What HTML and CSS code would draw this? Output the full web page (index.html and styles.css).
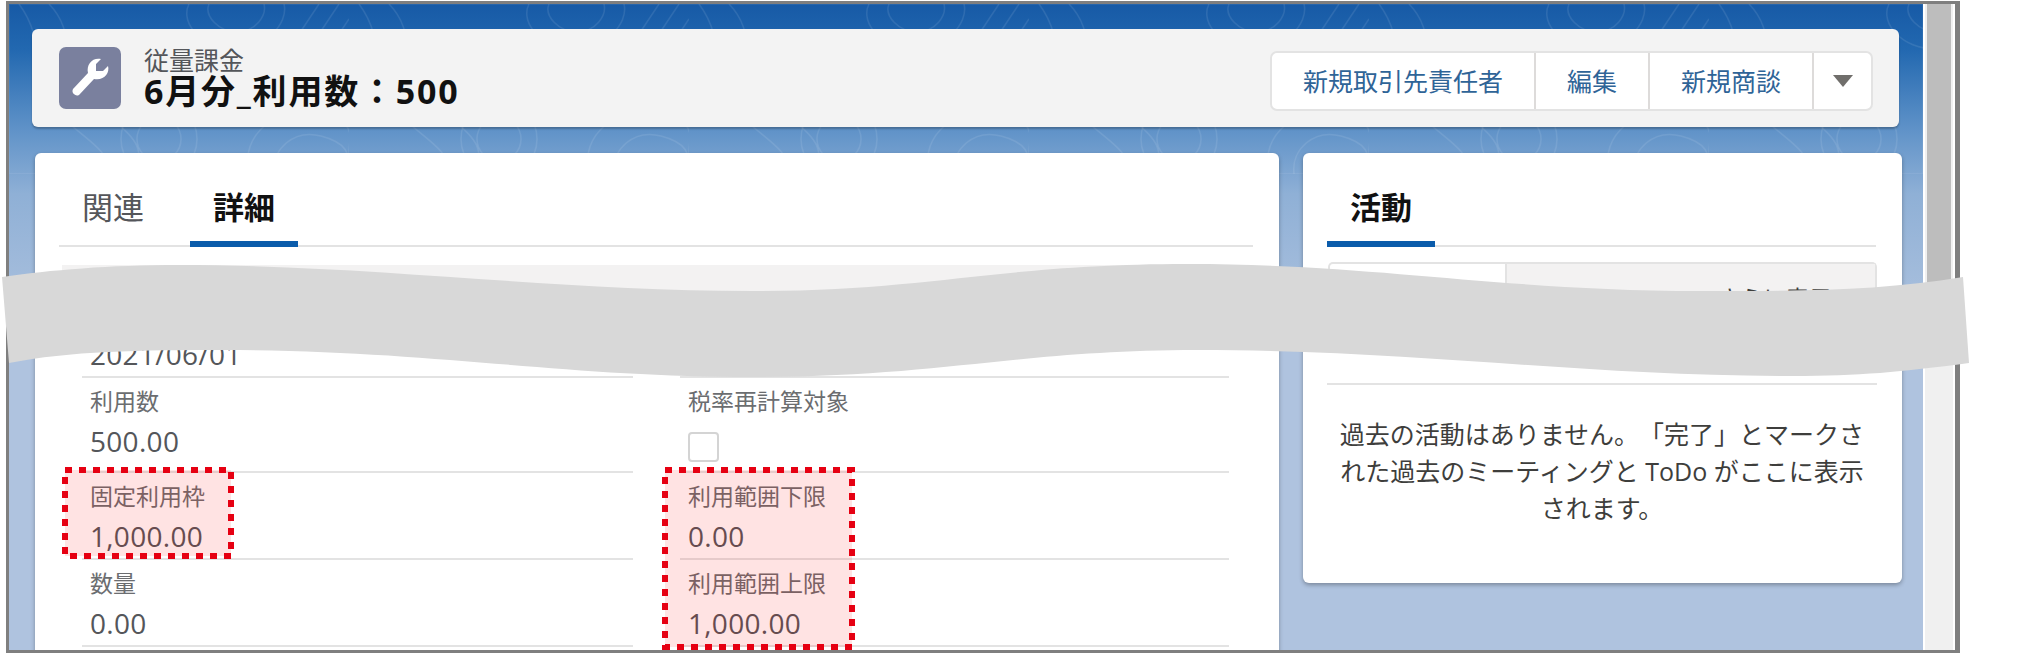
FILE: index.html
```html
<!DOCTYPE html>
<html lang="ja">
<head>
    <meta charset="UTF-8">
    <title>従量課金 - 6月分_利用数：500</title>
    <link rel="stylesheet" href="styles.css">
</head>
<body>
    <div class="window">
        <div class="page">
            <svg class="contours" width="1914" height="170" aria-hidden="true">
                <defs>
                    <pattern id="topo" width="340" height="170" patternUnits="userSpaceOnUse">
                        <path d="M10 0C40 40 20 80 50 110S110 150 90 170"/>
                        <path d="M40 0C70 30 50 70 85 100S140 140 125 170"/>
                        <circle cx="150" cy="135" r="22"/>
                        <circle cx="150" cy="135" r="38"/>
                        <path d="M180 0C170 20 195 45 225 45S280 20 275 0"/>
                        <path d="M200 0C195 12 210 28 228 28S258 12 255 0"/>
                        <path d="M240 170C230 130 270 100 310 110S340 130 340 150"/>
                        <path d="M265 170C262 145 285 125 312 132S340 150 340 165"/>
                        <path d="M310 0L270 60M330 0L290 60M340 15L310 60"/>
                    </pattern>
                </defs>
                <rect width="1914" height="170" fill="url(#topo)"/>
            </svg>

            <header class="record-header">
                <div class="record-icon">
                    <svg width="62" height="62" viewBox="0 0 62 62">
                        <path d="M42 12L37 17L37 24L44 24L49 19C51 26 45 34 35 32L20 48A4.5 4.5 0 0 1 14 42L29 26C27 17 34 10 42 12Z"/>
                    </svg>
                </div>
                <div class="record-title">
                    <div class="record-type">従量課金</div>
                    <h1>6月分_利用数：500</h1>
                </div>
                <div class="actions">
                    <a class="action">新規取引先責任者</a>
                    <a class="action">編集</a>
                    <a class="action">新規商談</a>
                    <a class="action action-more"><span class="caret"></span></a>
                </div>
            </header>

            <div class="columns">
                <section class="card card-detail">
                    <div class="tabs">
                        <a class="tab">関連</a>
                        <a class="tab active">詳細</a>
                    </div>
                    <div class="section-band"></div>
                    <div class="fields">
                        <div class="field field-first"><div class="value">2021/06/01</div></div>
                        <div class="field field-first"></div>
                        <div class="field">
                            <div class="label">利用数</div>
                            <div class="value">500.00</div>
                        </div>
                        <div class="field">
                            <div class="label">税率再計算対象</div>
                            <div class="checkbox"></div>
                        </div>
                        <div class="field">
                            <div class="label">固定利用枠</div>
                            <div class="value">1,000.00</div>
                        </div>
                        <div class="field">
                            <div class="label">利用範囲下限</div>
                            <div class="value">0.00</div>
                        </div>
                        <div class="field">
                            <div class="label">数量</div>
                            <div class="value">0.00</div>
                        </div>
                        <div class="field">
                            <div class="label">利用範囲上限</div>
                            <div class="value">1,000.00</div>
                        </div>
                    </div>
                </section>

                <aside class="card card-activity">
                    <div class="tabs">
                        <a class="tab active">活動</a>
                    </div>
                    <div class="subtabs">
                        <div class="subtab"></div>
                        <div class="subtab-more">さらに表示</div>
                    </div>
                    <p class="empty">過去の活動はありません。「完了」とマークされた過去のミーティングと ToDo がここに表示されます。</p>
                </aside>
            </div>
        </div>
        <div class="scrollbar"><div class="thumb"></div></div>
    </div>

    <svg class="annotations" width="2027" height="659" aria-hidden="true">
        <rect class="callout" x="65" y="470" width="166" height="86"/>
        <rect class="callout" x="665" y="470" width="187" height="177"/>
        <path class="tear" d="M2 277C50 270 110 265 178 265C380 265 550 291 753 291C930 291 1000 264 1187 264C1380 264 1500 291 1700 291C1800 291 1880 291 1963 277L1969 363C1900 372 1860 376 1792 376C1580 376 1420 350 1197 350C1020 350 940 377 753 377C560 377 430 350 223 350C140 350 70 351 9 363Z"/>
    </svg>
</body>
</html>
```

FILE: styles.css
```css
* {
    margin: 0;
    padding: 0;
    box-sizing: border-box;
}

body {
    position: relative;
    height: 659px;
    overflow: hidden;
    background: #fff;
    font-family: "Open Sans", "Noto Sans CJK JP", sans-serif;
    color: #3e3e3c;
    text-spacing-trim: space-all;
}

.window {
    display: flex;
    width: 1954px;
    height: 652px;
    margin: 1px 0 0 6px;
    border: 3px solid #7f7f7f;
    border-right-width: 5px;
}

.page {
    position: relative;
    flex: 1;
    overflow: hidden;
    padding: 25px 24px 0 23px;
    background: linear-gradient(180deg, #175aa6 0, #2268b0 45px, #5f92c8 125px, #8fb0d6 190px, #afc3df 330px);
}

.contours {
    position: absolute;
    top: 0;
    left: 0;
    fill: none;
    stroke: rgba(255, 255, 255, 0.09);
    stroke-width: 1.5;
}

.scrollbar {
    width: 32px;
    padding: 0 2px;
    background: #f0f0f0;
    border-left: 2px solid #fff;
    border-right: 2px solid #fff;
}

.thumb {
    height: 300px;
    background: #bdbdbd;
}

/* record header */
.record-header {
    position: relative;
    display: flex;
    align-items: center;
    height: 98px;
    padding: 0 26px 0 27px;
    background: #f3f3f3;
    border-radius: 6px;
    box-shadow: 0 2px 2px rgba(0, 0, 0, 0.25);
}

.record-icon {
    width: 62px;
    height: 62px;
    margin-right: 23px;
    background: #7a809e;
    border-radius: 7px;
}

.record-icon svg {
    display: block;
    fill: #fff;
}

.record-type {
    font-size: 25px;
    line-height: 26px;
    color: #54565a;
}

.record-title h1 {
    font-size: 34px;
    line-height: 36px;
    font-weight: 700;
    letter-spacing: 1.8px;
    color: #111;
}

.actions {
    display: flex;
    height: 60px;
    margin: 6px 0 0 auto;
    background: #fff;
    border: 2px solid #e3e3e3;
    border-radius: 7px;
}

.action {
    display: flex;
    align-items: center;
    padding: 0 31px 3px;
    font-size: 25px;
    color: #2f6497;
    border-left: 2px solid #dddbda;
}

.action:first-child {
    border-left: none;
}

.action-more {
    width: 59px;
    padding: 0;
    justify-content: center;
}

.caret {
    border-left: 10px solid transparent;
    border-right: 10px solid transparent;
    border-top: 12px solid #706e6b;
}

/* cards */
.columns {
    position: relative;
    display: grid;
    grid-template-columns: 1244px 599px;
    gap: 24px;
    align-items: start;
    margin: 26px -3px 0 3px;
}

.card {
    background: #fff;
    border-radius: 6px;
    box-shadow: 0 2px 4px rgba(0, 0, 0, 0.3);
}

.card-detail {
    min-height: 560px;
}

.tabs {
    display: flex;
    gap: 23px;
    margin: 0 26px 0 24px;
    border-bottom: 2px solid #e3e3e3;
}

.tab {
    height: 94px;
    margin-bottom: -2px;
    padding: 34px 23px 14px;
    font-size: 31px;
    line-height: 40px;
    color: #54565a;
}

.tab.active {
    font-weight: 700;
    color: #111;
    border-bottom: 6px solid #0b5cab;
}

.section-band {
    height: 33px;
    margin: 18px 25px 0 27px;
    background: #f3f2f2;
}

.fields {
    display: grid;
    grid-template-columns: 551px 549px;
    gap: 0 47px;
    margin-left: 47px;
}

.field {
    padding: 11px 8px 5px;
    border-bottom: 2px solid #e3e3e3;
}

.field-first {
    padding-top: 39px;
}

.label {
    font-size: 23px;
    line-height: 24px;
    color: #6b6d70;
}

.value {
    margin-top: 11px;
    font-size: 28px;
    line-height: 34px;
    letter-spacing: 0.3px;
    color: #54565a;
}

.field-first .value {
    margin-top: 0;
}

.checkbox {
    width: 31px;
    height: 30px;
    margin: 19px 0 4px;
    background: #fff;
    border: 2px solid #d4d4d4;
    border-radius: 4px;
}

/* activity */
.subtabs {
    display: flex;
    height: 70px;
    margin: 15px 25px 0;
    border: 2px solid #e3e3e3;
    border-bottom: none;
    border-radius: 5px 5px 0 0;
}

.subtab {
    width: 177px;
    border-right: 2px solid #e3e3e3;
}

.subtab-more {
    flex: 1;
    padding-right: 43px;
    background: #f3f2f2;
    font-size: 23px;
    line-height: 68px;
    text-align: right;
}

.empty {
    margin: 51px 25px 0 24px;
    padding: 31px 12px 56px;
    border-top: 2px solid #e3e3e3;
    font-size: 25px;
    line-height: 37px;
    text-align: center;
}

/* pink callouts and the torn strip are laid over the screenshot */
.annotations {
    position: absolute;
    top: 0;
    left: 0;
}

.callout {
    fill: rgba(255, 0, 0, 0.11);
    stroke: #e60012;
    stroke-width: 6;
    stroke-dasharray: 7 7;
}

.tear {
    fill: #d8d8d8;
}
```
